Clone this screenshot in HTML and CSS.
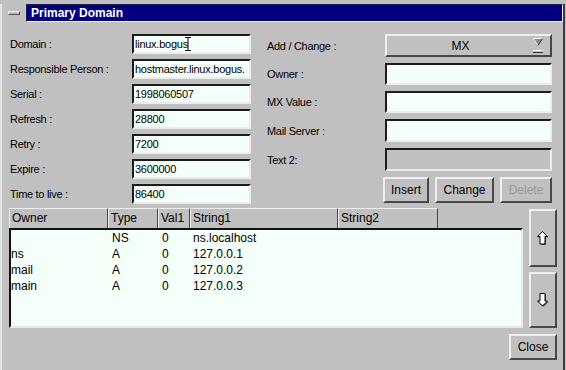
FILE: index.html
```html
<!DOCTYPE html>
<html lang="en">
<head>
<meta charset="UTF-8">
<title>Primary Domain</title>
<link rel="stylesheet" href="styles.css">
</head>
<body>

<div class="window">
    <div class="titlebar">
        <span class="menu-btn"></span>
        <div class="title">Primary Domain</div>
    </div>

    <div class="forms">
        <div class="soa">
            <span class="label">Domain :</span>
            <div class="entry">linux.bogus
                <svg class="ibeam" width="6" height="14" viewBox="0 0 6 14">
                    <path d="M0 0.5H6M3 0.5V13.5M0 13.5H6" stroke="#000" stroke-width="1" fill="none"/>
                </svg>
            </div>
            <span class="label">Responsible Person :</span>
            <div class="entry">hostmaster.linux.bogus.</div>
            <span class="label">Serial :</span>
            <div class="entry">1998060507</div>
            <span class="label">Refresh :</span>
            <div class="entry">28800</div>
            <span class="label">Retry :</span>
            <div class="entry">7200</div>
            <span class="label">Expire :</span>
            <div class="entry">3600000</div>
            <span class="label">Time to live :</span>
            <div class="entry">86400</div>
        </div>

        <div class="record">
            <span class="label">Add / Change :</span>
            <div class="option-btn">
                <span class="option-text">MX</span>
                <svg class="option-mark" width="10" height="16" viewBox="0 0 10 16">
                    <polygon points="0.5,0.5 9.5,0.5 5,7.5" fill="#8c8c8c"/>
                    <path d="M0.5 0.5H9.5" stroke="#fff"/>
                    <path d="M0.5 0.5L5 7.5" stroke="#e8e8e8"/>
                    <path d="M9.5 0.5L5 7.5" stroke="#303030"/>
                    <rect x="0" y="12" width="10" height="3" fill="#c0c0c0"/>
                    <path d="M0 12.5H10" stroke="#fff"/>
                    <path d="M0 14.5H10" stroke="#303030"/>
                </svg>
            </div>
            <span class="label">Owner :</span>
            <div class="entry"></div>
            <span class="label">MX Value :</span>
            <div class="entry"></div>
            <span class="label">Mail Server :</span>
            <div class="entry"></div>
            <span class="label">Text 2:</span>
            <div class="entry disabled"></div>
            <div class="actions">
                <button class="btn insert">Insert</button>
                <button class="btn change">Change</button>
                <button class="btn delete" disabled>Delete</button>
            </div>
        </div>
    </div>

    <div class="records">
        <div class="table">
            <div class="thead">
                <span class="th">Owner</span>
                <span class="th">Type</span>
                <span class="th">Val1</span>
                <span class="th">String1</span>
                <span class="th">String2</span>
            </div>
            <div class="list">
                <div class="row"><span></span><span>NS</span><span>0</span><span>ns.localhost</span></div>
                <div class="row"><span>ns</span><span>A</span><span>0</span><span>127.0.0.1</span></div>
                <div class="row"><span>mail</span><span>A</span><span>0</span><span>127.0.0.2</span></div>
                <div class="row"><span>main</span><span>A</span><span>0</span><span>127.0.0.3</span></div>
            </div>
        </div>
        <div class="move-btns">
            <button class="btn up">
                <svg width="12" height="15" viewBox="0 0 12 15">
                    <path d="M6.5 1.5L11.5 6.5H9V14H5V6.5H1.5Z" fill="#555"/>
                    <path d="M5.5 0.5L10.5 5.5H8V13H3V5.5H0.5Z" fill="#fff" stroke="#000"/>
                </svg>
            </button>
            <button class="btn down">
                <svg width="12" height="15" viewBox="0 0 12 15">
                    <path d="M6.5 14L11.5 9H9V1.5H5V9H1.5Z" fill="#555"/>
                    <path d="M5.5 13L10.5 8H8V0.5H3V8H0.5Z" fill="#fff" stroke="#000"/>
                </svg>
            </button>
        </div>
    </div>

    <div class="footer">
        <button class="btn close">Close</button>
    </div>
</div>

</body>
</html>
```

FILE: styles.css
```css
body {
    margin: 0;
    padding: 0;
    background-color: #c0c0c0;
    font-family: 'Liberation Sans', Arial, sans-serif;
    color: #000;
}
.window {
    position: relative;
    width: 565px;
    height: 369px;
    box-sizing: border-box;
    border-left: 2px solid #e4e4e4;
    border-right: 2px solid #3a3a3a;
    border-bottom: 2px solid #3a3a3a;
    background-color: #c0c0c0;
}
.titlebar {
    display: flex;
    align-items: center;
    height: 18px;
    margin-top: 4px;
}
.menu-btn {
    width: 12px;
    height: 4px;
    margin-left: 6px;
    box-sizing: border-box;
    border-top: 1px solid #f4f4f4;
    border-left: 1px solid #f4f4f4;
    border-bottom: 1px solid #505050;
    border-right: 1px solid #505050;
}
.title {
    flex: 1;
    height: 18px;
    margin-left: 6px;
    margin-right: 0;
    box-sizing: border-box;
    border: 1px solid;
    border-color: #202040 #f0f0f0 #f0f0f0 #202040;
    background-color: #000080;
    color: #fff;
    font-size: 12px;
    font-weight: bold;
    line-height: 16px;
    padding-left: 4px;
}
.forms {
    display: flex;
    margin-top: 12px;
    padding-left: 8px;
}
.label {
    font-size: 11px;
    letter-spacing: -0.3px;
    white-space: nowrap;
}
.entry {
    position: relative;
    box-sizing: border-box;
    height: 100%;
    border: 2px solid;
    border-color: #1c1c1c #ececec #ececec #1c1c1c;
    background-color: #f5fff9;
    font-size: 11px;
    letter-spacing: -0.25px;
    padding-left: 1px;
    line-height: 16px;
    white-space: nowrap;
    overflow: hidden;
}
.entry.disabled {
    background-color: #c0c0c0;
}
.ibeam {
    position: absolute;
    left: 51px;
    top: 1px;
}
.soa {
    display: grid;
    grid-template-columns: 122px 119px;
    grid-auto-rows: 20px;
    row-gap: 5px;
    align-items: center;
}
.record {
    display: grid;
    grid-template-columns: 118px 167px;
    grid-template-rows: 23px 22px 22px 23px 23px 26px;
    row-gap: 6px;
    align-items: center;
    margin-left: 16px;
}
.option-btn {
    display: flex;
    align-items: center;
    height: 100%;
    box-sizing: border-box;
    border: 2px solid;
    border-color: #eeeeee #484848 #484848 #eeeeee;
    font-size: 12px;
}
.option-text {
    flex: 1;
    text-align: center;
    padding-left: 1px;
}
.option-mark {
    margin-right: 7px;
}
.actions {
    grid-column: 1 / -1;
    justify-self: end;
    display: flex;
    gap: 6px;
    height: 100%;
}
.btn {
    box-sizing: border-box;
    height: 26px;
    padding: 0;
    border: 2px solid;
    border-color: #eeeeee #484848 #484848 #eeeeee;
    background-color: #c0c0c0;
    font-family: 'Liberation Sans', Arial, sans-serif;
    font-size: 12px;
    color: #000;
}
.btn.insert { width: 46px; }
.btn.change { width: 59px; }
.btn.delete {
    width: 52px;
    color: #9a9a9a;
}
.records {
    display: flex;
    margin-top: 4px;
    padding-left: 7px;
}
.table {
    width: 514px;
}
.thead {
    display: grid;
    grid-template-columns: 99px 50px 32px 148px 100px;
    height: 20px;
}
.th {
    box-sizing: border-box;
    border: 1px solid;
    border-color: #eeeeee #484848 #484848 #eeeeee;
    border-bottom: none;
    padding-left: 2px;
    font-size: 12px;
    line-height: 18px;
}
.list {
    box-sizing: border-box;
    height: 100px;
    border: 2px solid;
    border-color: #111 #e8e8e8 #e8e8e8 #111;
    background-color: #f5fff9;
    font-size: 12px;
}
.row {
    display: grid;
    grid-template-columns: 99px 50px 31px 148px;
    height: 16px;
    line-height: 16px;
}
.row span {
    padding-left: 2px;
}
.row span:first-child {
    padding-left: 0;
}
.move-btns {
    display: flex;
    flex-direction: column;
    gap: 5px;
    margin-left: 6px;
    margin-top: 1px;
}
.btn.up,
.btn.down {
    width: 28px;
    display: flex;
    align-items: center;
    justify-content: center;
}
.btn.up { height: 58px; }
.btn.down { height: 56px; }
.footer {
    display: flex;
    justify-content: flex-end;
    margin-top: 6px;
    padding-right: 6px;
}
.btn.close { width: 48px; }
```
